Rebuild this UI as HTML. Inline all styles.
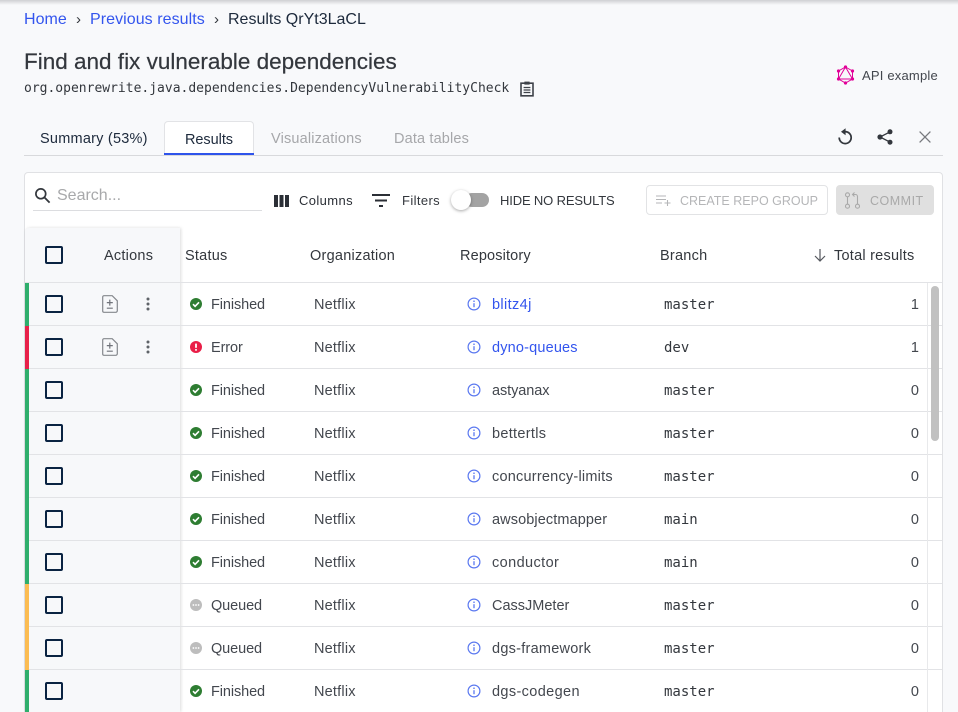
<!DOCTYPE html>
<html><head><meta charset="utf-8">
<style>
html,body{margin:0;padding:0;width:958px;height:712px;overflow:hidden;background:#f8f9fb;font-family:"Liberation Sans",sans-serif;color:#2b2f36}
*{box-sizing:border-box}
#p{position:relative;width:958px;height:712px;overflow:hidden}
.a{position:absolute;white-space:nowrap;line-height:20px}
svg{position:absolute;display:block;overflow:visible}
#shadow{position:absolute;left:0;top:0;width:958px;height:5px;background:linear-gradient(#cfd0d3,#f8f9fb)}
#card{position:absolute;left:24px;top:172px;width:919px;height:540px;background:#fff;border:1px solid #e0e1e4;border-bottom:none;border-radius:4px 4px 0 0}
#stick{position:absolute;left:25px;top:228px;width:155px;height:484px;background:#f7f8fa;box-shadow:1px 0 3px rgba(0,0,0,.14);border-top-left-radius:4px}
.l{position:absolute;left:25px;width:917px;height:1px;background:#e2e3e6}
.bar{position:absolute;left:25px;width:4px;height:43px}
.cb{position:absolute;left:45px;width:18px;height:18px;border:2px solid #0a2342;border-radius:2px;background:transparent}
.h{font-size:14.5px;letter-spacing:.24px;top:245px;margin-top:1px;color:#33373d}
.t{font-size:14.5px;letter-spacing:-.1px;margin-top:1px;color:#43474e}
.o{font-size:14.5px;letter-spacing:.2px;margin-top:1px;color:#43474e;left:314px}
.r{font-size:14.5px;letter-spacing:.17px;margin-top:1px;color:#43474e;left:492px}
.m{font-family:"DejaVu Sans Mono",monospace;font-size:14px;color:#33373d}
.n{font-size:14.5px;margin-top:1px;color:#43474e;left:880px;width:39px;text-align:right}
.lk{color:#3355ee}
</style></head><body><div id="p">
<svg width="0" height="0" style="position:absolute"><defs>
<symbol id="ok" viewBox="0 0 12 12"><circle cx="6" cy="6" r="6" fill="#2e7d32"/><path d="M3 6.2l2.1 2.1L9 4.3" fill="none" stroke="#fff" stroke-width="1.6"/></symbol>
<symbol id="err" viewBox="0 0 12 12"><circle cx="6" cy="6" r="6" fill="#e91e47"/><path d="M6 2.6v4.2" stroke="#fff" stroke-width="1.8"/><circle cx="6" cy="8.9" r="1" fill="#fff"/></symbol>
<symbol id="q" viewBox="0 0 12 12"><circle cx="6" cy="6" r="6" fill="#bdbdbd"/><circle cx="3.4" cy="6" r=".9" fill="#fff"/><circle cx="6" cy="6" r=".9" fill="#fff"/><circle cx="8.6" cy="6" r=".9" fill="#fff"/></symbol>
<symbol id="inf" viewBox="0 0 14 14"><circle cx="7" cy="7" r="5.9" fill="none" stroke="#5a78f0" stroke-width="1.2"/><path d="M7 6.2v4" stroke="#5a78f0" stroke-width="1.3"/><circle cx="7" cy="4.2" r=".8" fill="#5a78f0"/></symbol>
<symbol id="doc" viewBox="0 0 16 18"><path d="M2 .7h8.2L15.3 5.8V15.8a1.5 1.5 0 0 1-1.5 1.5H2A1.3 1.3 0 0 1 .7 16V2A1.3 1.3 0 0 1 2 .7z" fill="none" stroke="#85888d" stroke-width="1.2"/><path d="M7.8 4.6v6M4.8 7.6h6M4.8 13.2h6" stroke="#70737a" stroke-width="1.2" fill="none"/></symbol>
<symbol id="dots" viewBox="0 0 4 14"><circle cx="2" cy="2" r="1.5" fill="#5f6368"/><circle cx="2" cy="7" r="1.5" fill="#5f6368"/><circle cx="2" cy="12" r="1.5" fill="#5f6368"/></symbol>
</defs></svg>
<div id="shadow"></div>

<div class="a" style="left:24px;top:10px;font-size:16px;letter-spacing:.02px;color:#3355ee">Home</div>
<div class="a" style="left:76px;top:10px;font-size:15px;color:#33373d">›</div>
<div class="a" style="left:90px;top:10px;font-size:16px;letter-spacing:.06px;color:#3355ee">Previous results</div>
<div class="a" style="left:214px;top:10px;font-size:15px;color:#33373d">›</div>
<div class="a" style="left:228px;top:10px;font-size:16px;color:#1d2a3c">Results QrYt3LaCL</div>

<div class="a" style="left:24px;top:49px;font-size:22.500px;line-height:26px;color:#33373d;-webkit-text-stroke:.2px #33373d">Find and fix vulnerable dependencies</div>
<div class="a" style="left:24px;top:79px;font-family:'DejaVu Sans Mono',monospace;font-size:13px;color:#33373d">org.openrewrite.java.dependencies.DependencyVulnerabilityCheck</div>
<svg style="left:520px;top:80px" width="14" height="17" viewBox="0 0 14 17"><path d="M1 3.2h12v12.6H1z" fill="none" stroke="#3e4249" stroke-width="1.6"/><path d="M4.4 1.600h5.200v3H4.400z" fill="#3e4249"/><path d="M3.600 7.500h6.800M3.600 10h6.800M3.600 12.500h6.800" stroke="#3e4249" stroke-width="1.300"/></svg>

<svg style="left:836px;top:65px" width="19" height="20" viewBox="0 0 19 20" fill="none" stroke="#e10098" stroke-width="1"><path d="M9.500 2L16.500 6V14L9.500 18L2.500 14V6z"/><path d="M9.500 2L16.500 14H2.500z"/><g fill="#e10098" stroke="none"><circle cx="9.500" cy="2" r="1.600"/><circle cx="16.500" cy="6" r="1.600"/><circle cx="16.500" cy="14" r="1.600"/><circle cx="9.500" cy="18" r="1.600"/><circle cx="2.500" cy="14" r="1.600"/><circle cx="2.500" cy="6" r="1.600"/></g></svg>
<div class="a" style="left:862px;top:66px;font-size:13px;letter-spacing:.2px;color:#43474e">API example</div>

<div class="a" style="left:40px;top:129px;font-size:14.500px;letter-spacing:.23px;color:#1d2a3c">Summary (53%)</div>
<div style="position:absolute;left:24px;top:155px;width:919px;height:1px;background:#d8d9dc"></div>
<div style="position:absolute;left:164px;top:121px;width:90px;height:34px;background:#fff;border:1px solid #e2e3e6;border-bottom:none;border-radius:4px 4px 0 0"></div>
<div style="position:absolute;left:164px;top:153px;width:90px;height:2px;background:#2f54eb"></div>
<div class="a" style="left:185px;top:130px;font-size:14.500px;letter-spacing:-.05px;color:#1d2a3c">Results</div>
<div class="a" style="left:271px;top:129px;font-size:14.500px;letter-spacing:.17px;color:#a6a7aa">Visualizations</div>
<div class="a" style="left:394px;top:129px;font-size:14.500px;letter-spacing:.15px;color:#a6a7aa">Data tables</div>

<svg style="left:837px;top:128px" width="16" height="18" viewBox="0 0 16 18"><path d="M8 3.600A6 6 0 1 1 2.200 9.500" fill="none" stroke="#33373d" stroke-width="1.700"/><path d="M8.600 .2v7L4 3.700z" fill="#33373d"/></svg>
<svg style="left:877px;top:129px" width="16" height="16" viewBox="0 0 16 16"><path d="M13.200 2.800L3 8l10.200 5.200" fill="none" stroke="#33373d" stroke-width="1.300"/><circle cx="13" cy="2.800" r="2.500" fill="#33373d"/><circle cx="3" cy="8" r="2.600" fill="#33373d"/><circle cx="13" cy="13.200" r="2.500" fill="#33373d"/></svg>
<svg style="left:919px;top:131px" width="12" height="12" viewBox="0 0 12 12"><path d="M.6.6l10.800 10.800M11.400.6L.6 11.400" stroke="#77797e" stroke-width="1.300"/></svg>

<div id="card"></div>

<svg style="left:34px;top:187px" width="17" height="17" viewBox="0 0 17 17"><circle cx="6.800" cy="6.800" r="4.900" fill="none" stroke="#33373d" stroke-width="1.700"/><path d="M10.400 10.400l5.200 5.200" stroke="#33373d" stroke-width="1.800"/></svg>
<div class="a" style="left:57px;top:186px;font-size:16px;color:#a8a9ab">Search...</div>
<div style="position:absolute;left:33px;top:210px;width:229px;height:1px;background:#dcdde0"></div>

<svg style="left:274px;top:195px" width="15" height="12" viewBox="0 0 15 12" fill="#2b2f36"><rect x="0" y="0" width="4" height="12"/><rect x="5.500" y="0" width="4" height="12"/><rect x="11" y="0" width="4" height="12"/></svg>
<div class="a" style="left:299px;top:191px;font-size:13px;letter-spacing:.38px;color:#2b2f36">Columns</div>
<svg style="left:372px;top:194px" width="18" height="13" viewBox="0 0 18 13" fill="#2b2f36"><rect x="0" y="0" width="18" height="2"/><rect x="3" y="5.500" width="12" height="2"/><rect x="7" y="11" width="4" height="2"/></svg>
<div class="a" style="left:402px;top:191px;font-size:13px;letter-spacing:.38px;color:#33373d">Filters</div>
<div style="position:absolute;left:465px;top:193px;width:24px;height:14px;border-radius:7px;background:#a3a3a3"></div>
<div style="position:absolute;left:451px;top:190px;width:20px;height:20px;border-radius:50%;background:#fff;box-shadow:0 1px 3px rgba(0,0,0,.35)"></div>
<div class="a" style="left:500px;top:191px;font-size:13px;letter-spacing:-.15px;color:#33373d">HIDE NO RESULTS</div>

<div style="position:absolute;left:646px;top:185px;width:182px;height:30px;border:1px solid #e2e3e5;border-radius:4px"></div>
<svg style="left:656px;top:195px" width="15" height="11" viewBox="0 0 15 11"><path d="M0 1h10M0 4.500h10M0 8h6M8.500 8h6M11.500 5v6" stroke="#b5b6b8" stroke-width="1.100" fill="none"/></svg>
<div class="a" style="left:680px;top:191px;font-size:12.500px;letter-spacing:0;color:#b5b6b8">CREATE REPO GROUP</div>
<div style="position:absolute;left:836px;top:185px;width:98px;height:30px;background:#e0e0e0;border-radius:4px"></div>
<svg style="left:844px;top:192px" width="17" height="17" viewBox="0 0 17 17" fill="none" stroke="#a9a9a9" stroke-width="1.100"><circle cx="3.500" cy="2.800" r="2"/><circle cx="3.500" cy="14.200" r="2"/><circle cx="13.500" cy="14.200" r="2"/><path d="M3.500 4.800v7.400M13.500 12.200V4.500a2 2 0 0 0-2-2H8.500M10.500 .5l-2 2 2 2"/></svg>
<div class="a" style="left:870px;top:191px;font-size:12.500px;letter-spacing:.5px;color:#a9a9a9">COMMIT</div>

<div id="stick"></div>
<div class="l" style="top:282px"></div>
<div class="l" style="top:325px"></div>
<div class="l" style="top:368px"></div>
<div class="l" style="top:411px"></div>
<div class="l" style="top:454px"></div>
<div class="l" style="top:497px"></div>
<div class="l" style="top:540px"></div>
<div class="l" style="top:583px"></div>
<div class="l" style="top:626px"></div>
<div class="l" style="top:669px"></div>

<div style="position:absolute;left:927px;top:283px;width:1px;height:429px;background:#e8e9eb"></div>
<div style="position:absolute;left:931px;top:286px;width:8px;height:155px;background:#c1c1c1;border-radius:4px"></div>

<div class="cb" style="top:246px"></div>
<div class="a h" style="left:104px">Actions</div>
<div class="a h" style="left:185px">Status</div>
<div class="a h" style="left:310px">Organization</div>
<div class="a h" style="left:460px;letter-spacing:.14px">Repository</div>
<div class="a h" style="left:660px">Branch</div>
<svg style="left:814px;top:249px" width="12" height="13" viewBox="0 0 12 13"><path d="M6 0v12M1 7l5 5 5-5" fill="none" stroke="#55585e" stroke-width="1.200"/></svg>
<div class="a h" style="left:834px">Total results</div>

<div class="bar" style="top:283px;background:#2fae6c"></div>
<div class="cb" style="top:295px"></div>
<svg style="left:102px;top:295px" width="16" height="18"><use href="#doc"/></svg>
<svg style="left:146px;top:297px" width="4" height="14"><use href="#dots"/></svg>
<svg style="left:190px;top:298px" width="12" height="12"><use href="#ok"/></svg>
<div class="a t" style="left:211px;top:294px">Finished</div>
<div class="a o" style="top:294px">Netflix</div>
<svg style="left:467px;top:297px" width="14" height="14"><use href="#inf"/></svg>
<div class="a r lk" style="top:294px;letter-spacing:.37px">blitz4j</div>
<div class="a m" style="left:664px;top:295px">master</div>
<div class="a n" style="top:294px">1</div>

<div class="bar" style="top:326px;background:#e8214a"></div>
<div class="cb" style="top:338px"></div>
<svg style="left:102px;top:338px" width="16" height="18"><use href="#doc"/></svg>
<svg style="left:146px;top:340px" width="4" height="14"><use href="#dots"/></svg>
<svg style="left:190px;top:341px" width="12" height="12"><use href="#err"/></svg>
<div class="a t" style="left:211px;top:337px">Error</div>
<div class="a o" style="top:337px">Netflix</div>
<svg style="left:467px;top:340px" width="14" height="14"><use href="#inf"/></svg>
<div class="a r lk" style="top:337px">dyno-queues</div>
<div class="a m" style="left:664px;top:338px">dev</div>
<div class="a n" style="top:337px">1</div>

<div class="bar" style="top:369px;background:#2fae6c"></div>
<div class="cb" style="top:381px"></div>
<svg style="left:190px;top:384px" width="12" height="12"><use href="#ok"/></svg>
<div class="a t" style="left:211px;top:380px">Finished</div>
<div class="a o" style="top:380px">Netflix</div>
<svg style="left:467px;top:383px" width="14" height="14"><use href="#inf"/></svg>
<div class="a r" style="top:380px;letter-spacing:-.08px">astyanax</div>
<div class="a m" style="left:664px;top:381px">master</div>
<div class="a n" style="top:380px">0</div>

<div class="bar" style="top:412px;background:#2fae6c"></div>
<div class="cb" style="top:424px"></div>
<svg style="left:190px;top:427px" width="12" height="12"><use href="#ok"/></svg>
<div class="a t" style="left:211px;top:423px">Finished</div>
<div class="a o" style="top:423px">Netflix</div>
<svg style="left:467px;top:426px" width="14" height="14"><use href="#inf"/></svg>
<div class="a r" style="top:423px;letter-spacing:.3px">bettertls</div>
<div class="a m" style="left:664px;top:424px">master</div>
<div class="a n" style="top:423px">0</div>

<div class="bar" style="top:455px;background:#2fae6c"></div>
<div class="cb" style="top:467px"></div>
<svg style="left:190px;top:470px" width="12" height="12"><use href="#ok"/></svg>
<div class="a t" style="left:211px;top:466px">Finished</div>
<div class="a o" style="top:466px">Netflix</div>
<svg style="left:467px;top:469px" width="14" height="14"><use href="#inf"/></svg>
<div class="a r" style="top:466px;letter-spacing:.22px">concurrency-limits</div>
<div class="a m" style="left:664px;top:467px">master</div>
<div class="a n" style="top:466px">0</div>

<div class="bar" style="top:498px;background:#2fae6c"></div>
<div class="cb" style="top:510px"></div>
<svg style="left:190px;top:513px" width="12" height="12"><use href="#ok"/></svg>
<div class="a t" style="left:211px;top:509px">Finished</div>
<div class="a o" style="top:509px">Netflix</div>
<svg style="left:467px;top:512px" width="14" height="14"><use href="#inf"/></svg>
<div class="a r" style="top:509px;letter-spacing:.1px">awsobjectmapper</div>
<div class="a m" style="left:664px;top:510px">main</div>
<div class="a n" style="top:509px">0</div>

<div class="bar" style="top:541px;background:#2fae6c"></div>
<div class="cb" style="top:553px"></div>
<svg style="left:190px;top:556px" width="12" height="12"><use href="#ok"/></svg>
<div class="a t" style="left:211px;top:552px">Finished</div>
<div class="a o" style="top:552px">Netflix</div>
<svg style="left:467px;top:555px" width="14" height="14"><use href="#inf"/></svg>
<div class="a r" style="top:552px;letter-spacing:.4px">conductor</div>
<div class="a m" style="left:664px;top:553px">main</div>
<div class="a n" style="top:552px">0</div>

<div class="bar" style="top:584px;background:#fbbc52"></div>
<div class="cb" style="top:596px"></div>
<svg style="left:190px;top:599px" width="12" height="12"><use href="#q"/></svg>
<div class="a t" style="left:211px;top:595px">Queued</div>
<div class="a o" style="top:595px">Netflix</div>
<svg style="left:467px;top:598px" width="14" height="14"><use href="#inf"/></svg>
<div class="a r" style="top:595px;letter-spacing:0">CassJMeter</div>
<div class="a m" style="left:664px;top:596px">master</div>
<div class="a n" style="top:595px">0</div>

<div class="bar" style="top:627px;background:#fbbc52"></div>
<div class="cb" style="top:639px"></div>
<svg style="left:190px;top:642px" width="12" height="12"><use href="#q"/></svg>
<div class="a t" style="left:211px;top:638px">Queued</div>
<div class="a o" style="top:638px">Netflix</div>
<svg style="left:467px;top:641px" width="14" height="14"><use href="#inf"/></svg>
<div class="a r" style="top:638px;letter-spacing:.25px">dgs-framework</div>
<div class="a m" style="left:664px;top:639px">master</div>
<div class="a n" style="top:638px">0</div>

<div class="bar" style="top:670px;background:#2fae6c"></div>
<div class="cb" style="top:682px"></div>
<svg style="left:190px;top:685px" width="12" height="12"><use href="#ok"/></svg>
<div class="a t" style="left:211px;top:681px">Finished</div>
<div class="a o" style="top:681px">Netflix</div>
<svg style="left:467px;top:684px" width="14" height="14"><use href="#inf"/></svg>
<div class="a r" style="top:681px;letter-spacing:.37px">dgs-codegen</div>
<div class="a m" style="left:664px;top:682px">master</div>
<div class="a n" style="top:681px">0</div>
</div></body></html>
